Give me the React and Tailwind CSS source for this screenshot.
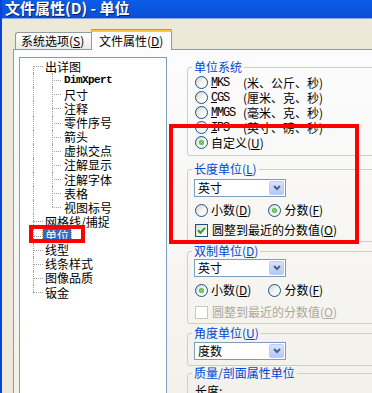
import React from "react";

const cjk = "font-['Noto_Sans_CJK_SC','Noto_Sans',sans-serif]";

function Acc({ k }) {
  return (
    <>
      (<span className="underline">{k}</span>)
    </>
  );
}

const treeItems = [
  { t: "出详图", l: 1, first: true },
  { t: "DimXpert", l: 2, mono: true },
  { t: "尺寸", l: 2 },
  { t: "注释", l: 2 },
  { t: "零件序号", l: 2 },
  { t: "箭头", l: 2 },
  { t: "虚拟交点", l: 2 },
  { t: "注解显示", l: 2 },
  { t: "注解字体", l: 2 },
  { t: "表格", l: 2 },
  { t: "视图标号", l: 2, last: true },
  { t: "网格线/捕捉", l: 1 },
  { t: "单位", l: 1, selected: true },
  { t: "线型", l: 1 },
  { t: "线条样式", l: 1 },
  { t: "图像品质", l: 1 },
  { t: "钣金", l: 1, last: true },
];

function TreeRow({ item }) {
  const dot = "border-[#A0A0A0] border-dotted";
  return (
    <div className="relative h-[14.125px] flex items-center">
      {/* level 1 vertical */}
      {item.l === 1 && item.first && (
        <span className={`absolute left-[13px] top-1/2 bottom-0 border-l ${dot}`} />
      )}
      {item.l === 1 && item.last && (
        <span className={`absolute left-[13px] top-0 h-1/2 border-l ${dot}`} />
      )}
      {((item.l === 1 && !item.first && !item.last) || item.l === 2) && (
        <span className={`absolute left-[13px] top-0 bottom-0 border-l ${dot}`} />
      )}
      {item.l === 1 && (
        <span className={`absolute left-[13px] top-1/2 w-[10px] border-t ${dot}`} />
      )}
      {item.l === 2 && (
        <>
          <span
            className={`absolute left-[32px] top-0 border-l ${dot} ${item.last ? "h-1/2" : "bottom-0"}`}
          />
          <span className={`absolute left-[32px] top-1/2 w-[9px] border-t ${dot}`} />
        </>
      )}
      <span
        className={`${item.l === 1 ? "ml-[23px]" : "ml-[42px]"} ${
          item.selected
            ? "bg-[#316AC5] text-white px-[2px] outline outline-1 outline-dotted outline-[#CE9C31]"
            : "px-[2px]"
        } ${
          item.mono
            ? "font-['Liberation_Mono',monospace] font-bold text-[11px] tracking-[-0.6px]"
            : "text-[12px]"
        } leading-[13px] whitespace-nowrap`}
      >
        {item.t}
      </span>
    </div>
  );
}

function Radio({ checked, children, className = "" }) {
  return (
    <div className={`flex items-center h-[14px] ${className}`}>
      <span className="w-[13px] h-[13px] shrink-0 rounded-full border border-[#1C5180] bg-linear-to-br from-[#D4D4CC] via-[#F4F4F0] to-white flex items-center justify-center">
        {checked && (
          <span className="w-[5px] h-[5px] rounded-full bg-radial from-[#7EE27E] to-[#21A121]" />
        )}
      </span>
      <span className="ml-[3px] text-[12px] leading-[14px] whitespace-nowrap flex items-center">
        {children}
      </span>
    </div>
  );
}

function Check({ checked, disabled, children, className = "" }) {
  return (
    <div className={`flex items-center h-[14px] ${className}`}>
      <span
        className={`w-[13px] h-[13px] shrink-0 border flex items-center justify-center ${
          disabled
            ? "border-[#CAC8BB] bg-white"
            : "border-[#1C5180] bg-linear-to-br from-[#DCDCD7] to-white"
        }`}
      >
        {checked && (
          <svg width="9" height="9" viewBox="0 0 9 9">
            <path d="M1 4.2 L3.5 6.8 L8 1.8" fill="none" stroke="#21A121" strokeWidth="2" />
          </svg>
        )}
      </span>
      <span
        className={`ml-[4px] text-[12px] leading-[14px] whitespace-nowrap ${
          disabled ? "text-[#ACA899]" : ""
        }`}
      >
        {children}
      </span>
    </div>
  );
}

function Select({ value, className = "" }) {
  return (
    <div
      className={`ml-[6px] w-[92px] h-[18px] border border-[#7F9DB9] bg-white flex items-center justify-between ${className}`}
    >
      <span className="ml-[3px] text-[12px] leading-[14px]">{value}</span>
      <span className="mr-[1px] w-[15px] h-[14px] rounded-[2px] border border-[#B9CDF8] bg-linear-to-b from-[#D8E4FC] to-[#B4C8F6] flex items-center justify-center">
        <svg width="8" height="6" viewBox="0 0 8 6">
          <path d="M1 1 L4 4 L7 1" fill="none" stroke="#4D6185" strokeWidth="2" />
        </svg>
      </span>
    </div>
  );
}

function Group({ title, className = "", children }) {
  return (
    <fieldset
      className={`w-[200px] border border-[#D0D0BF] rounded-[3px] ${className}`}
    >
      <legend className="ml-[4px] px-[2px] text-[12px] leading-[14px] text-[#0046D5] whitespace-nowrap">
        {title}
      </legend>
      {children}
    </fieldset>
  );
}

const systems = [
  { code: "MKS", rest: "(米、公斤、秒)" },
  { code: "CGS", rest: "(厘米、克、秒)" },
  { code: "MMGS", rest: "(毫米、克、秒)" },
  { code: "IPS", rest: "(英寸、磅、秒)" },
];

export default function App() {
  return (
    <div
      className={`relative w-[372px] h-[393px] overflow-hidden bg-[#ECE9D8] border-l-2 border-[#0842D6] flex flex-col text-black ${cjk}`}
    >
      {/* Title bar */}
      <div className="h-[18px] shrink-0 bg-linear-to-b from-[#0A5CE6] to-[#0B4FD8] flex items-center pl-[3px]">
        <span className="text-white font-bold text-[15px] leading-[15px] -mt-[3px] [text-shadow:1px_1px_0_#0A1E6E]">
          文件属性(D) - 单位
        </span>
      </div>
      <div className="h-[1px] shrink-0 bg-[#8DA7E6]" />

      {/* Tabs + page */}
      <div className="flex-1 min-h-0 flex flex-col pl-[11px] pt-[10px]">
        <div className="h-[20px] shrink-0 flex items-end pl-[2px]">
          <div className="w-[76px] h-[17px] border border-b-0 border-r-0 border-[#919B9C] rounded-tl-[3px] bg-linear-to-b from-white to-[#ECEBE6] flex items-center pl-[5px] text-[12px] leading-[14px]">
            系统选项<Acc k="S" />
          </div>
          <div className="relative z-10 -mb-[1px] w-[81px] h-[21px] border-x border-[#919B9C] rounded-t-[3px] bg-[#FCFCFE] flex flex-col">
            <div className="h-[1px] bg-[#E68B2C] rounded-t-[3px] -mx-[1px]" />
            <div className="h-[2px] bg-[#FFC73C]" />
            <div className="flex-1 flex items-center pl-[7px] text-[12px] leading-[14px]">
              文件属性<Acc k="D" />
            </div>
          </div>
        </div>

        <div className="flex-1 min-h-0 overflow-hidden border-t border-l border-[#919B9C] bg-linear-to-b from-[#FCFCFE] to-[#F2F1EB]">
          <div className="flex items-start">
            {/* Tree */}
            <div className="mt-[7px] ml-[5px] w-[148px] h-[340px] shrink-0 border border-[#7F9DB9] bg-white pt-[1px]">
              {treeItems.map((it) => (
                <TreeRow key={it.t} item={it} />
              ))}
            </div>

            {/* Options */}
            <div className="ml-[20px] pt-[10px] flex flex-col">
              <Group title="单位系统" className="pb-[5px]">
                <div className="flex flex-col pl-[7px] pt-[1px]">
                  {systems.map((s) => (
                    <div key={s.code} className="h-[15px] flex items-center">
                      <Radio>
                        <span className="w-[32px] font-['Liberation_Mono',monospace] text-[12px] tracking-[-1.2px]">
                          <span className="underline">{s.code[0]}</span>
                          {s.code.slice(1)}
                        </span>
                        <span>{s.rest}</span>
                      </Radio>
                    </div>
                  ))}
                  <div className="h-[15px] flex items-center">
                    <Radio checked>
                      自定义<Acc k="U" />
                    </Radio>
                  </div>
                </div>
              </Group>

              <Group title={<>长度单位<Acc k="L" /></>} className="mt-[6px] pb-[4px]">
                <Select value="英寸" className="mt-[3px]" />
                <div className="mt-[6px] ml-[7px] flex">
                  <Radio>
                    小数<Acc k="D" />
                  </Radio>
                  <Radio checked className="ml-[17px]">
                    分数<Acc k="F" />
                  </Radio>
                </div>
                <Check checked className="mt-[6px] ml-[7px]">
                  圆整到最近的分数值<Acc k="O" />
                </Check>
              </Group>

              <Group title={<>双制单位<Acc k="D" /></>} className="mt-[2px] pb-[4px]">
                <Select value="英寸" className="mt-[1px]" />
                <div className="mt-[6px] ml-[7px] flex">
                  <Radio checked>
                    小数<Acc k="D" />
                  </Radio>
                  <Radio className="ml-[17px]">
                    分数<Acc k="F" />
                  </Radio>
                </div>
                <Check disabled className="mt-[8px] ml-[7px]">
                  圆整到最近的分数值<Acc k="O" />
                </Check>
              </Group>

              <Group title={<>角度单位<Acc k="U" /></>} className="mt-[2px] pb-[5px]">
                <Select value="度数" className="mt-[2px]" />
              </Group>

              <Group title="质量/剖面属性单位" className="pb-[20px]">
                <div className="ml-[7px] mt-[4px] text-[12px] leading-[14px]">长度:</div>
              </Group>
            </div>
          </div>
        </div>
      </div>

      {/* red annotation boxes */}
      <div className="absolute left-[27px] top-[225px] w-[56px] h-[18px] border-4 border-[#FF0000] pointer-events-none" />
      <div className="absolute left-[167px] top-[124px] w-[190px] h-[120px] border-4 border-[#FF0000] pointer-events-none" />
    </div>
  );
}
